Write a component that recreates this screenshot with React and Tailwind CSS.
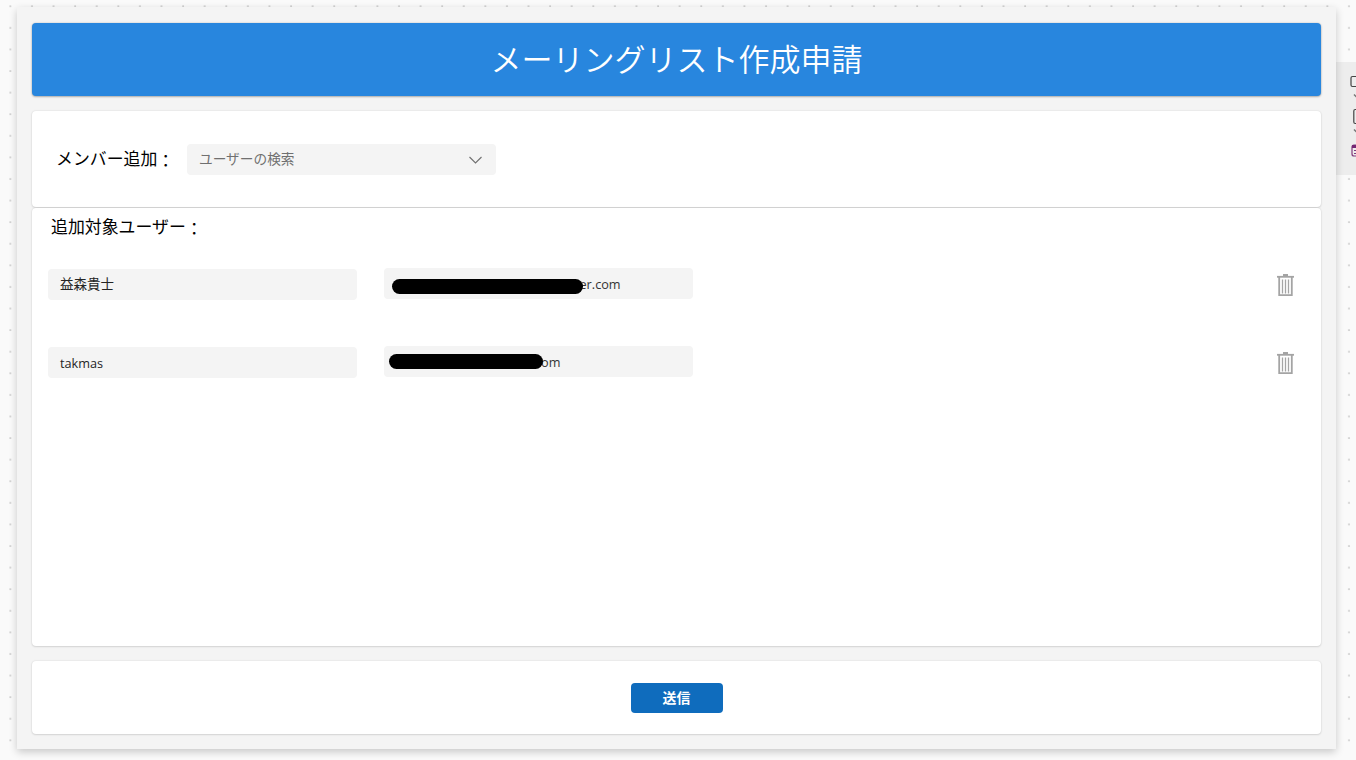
const users = [
  { name: "益森貴士", nameText: "text-[13.5px]", mail: "er.com", mailPad: "pl-[195.5px] pt-[3px]", mask: "left-[8px] top-[11px] w-[191px]" },
  { name: "takmas", nameText: "text-[12.7px] pt-[2px]", mail: "om", mailPad: "pl-[157px] pt-[2px]", mask: "left-[5px] top-[8px] w-[154px]" },
];

const TrashIcon = () => (
  <svg width="17" height="23" viewBox="0 0 17 23" fill="none" stroke="#a4a4a4">
    <path d="M6 1h5" strokeWidth="2" />
    <path d="M0 2.8h17" strokeWidth="1.8" />
    <path d="M2.2 3v18.2h12.6V3" strokeWidth="1.8" />
    <path d="M5.5 5.5v14M8.5 5.5v14M11.5 5.5v14" strokeWidth="1.3" />
  </svg>
);

const UserRow = ({ user }) => (
  <div className="flex h-[78px] items-start">
    <div className={`mt-[1px] flex h-[31px] w-[309px] items-center rounded-[4px] bg-[#f4f4f4] pl-3 text-[#242424] ${user.nameText}`}>
      {user.name}
    </div>
    <div className={`relative ml-[27px] flex h-[31px] w-[309px] items-center rounded-[4px] bg-[#f4f4f4] text-[12.7px] text-[#333] ${user.mailPad}`}>
      {user.mail}
      <span className={`absolute h-[15px] rounded-full bg-black ${user.mask}`} />
    </div>
    <button className="ml-auto mr-[27px] mt-[5.5px]" aria-label="削除">
      <TrashIcon />
    </button>
  </div>
);

// Canvas grid dots around the form
const DotGrid = () => (
  <svg className="absolute inset-0" width="1356" height="760">
    <defs>
      <pattern id="dots" x="-0.5" y="-4.6" width="21.59" height="21.59" patternUnits="userSpaceOnUse">
        <rect x="10" y="10" width="1.8" height="1.8" fill="#cfcfcf" />
      </pattern>
    </defs>
    <rect width="1356" height="760" fill="url(#dots)" />
  </svg>
);

// Edge of the tool bar, cut off by the window
const SideTools = () => (
  <div className="absolute left-[1336px] top-[62px] h-[113px] w-5 bg-[#ededed]">
    <svg width="20" height="113" fill="none" stroke="#444" strokeWidth="1.2">
      <rect x="15" y="14.5" width="12" height="10" rx="1.5" />
      <path d="M18 32.5l2 2 2-2" stroke="#777" strokeWidth="1.5" />
      <rect x="17.8" y="47.5" width="10" height="14" rx="1.5" />
      <path d="M18 67.5l2 2 2-2" stroke="#777" strokeWidth="1.5" />
      <rect x="16" y="83" width="12" height="11" rx="2" stroke="#813a7c" />
      <path d="M16 84.5h4" stroke="#742774" strokeWidth="3" />
      <path d="M18 88.5h2M18 91.5h2" stroke="#813a7c" />
    </svg>
  </div>
);

const card = "rounded-[4px] bg-white shadow-[0_0_2px_rgba(0,0,0,0.12),0_1px_2px_rgba(0,0,0,0.1)]";

export default function App() {
  return (
    <div className="relative h-[760px] w-[1356px] overflow-hidden bg-[#fafafa] pl-[17px] pt-[7px] font-['Open_Sans','Noto_Sans_CJK_JP',sans-serif]">
      <DotGrid />
      <SideTools />
      <main className="relative flex h-[742px] w-[1319px] flex-col bg-[#f4f4f4] px-[15px] pt-4 shadow-[0_3px_8px_rgba(0,0,0,0.2)]">
        <header className="flex h-[72.5px] shrink-0 items-center justify-center rounded-[4px] bg-[#2886de] pb-[3px] shadow-[0_0_2px_rgba(0,0,0,0.18),0_1px_2px_rgba(0,0,0,0.25)]">
          <h1 className="font-['Noto_Sans_CJK_JP',sans-serif] text-[31px] font-[350] leading-none text-white">メーリングリスト作成申請</h1>
        </header>

        <section className={`mt-[15.5px] flex h-[96px] shrink-0 items-center pl-6 ${card}`}>
          <label className="w-[131px] text-[16.9px] text-black">
            メンバー追加<span className="relative top-[2px]">：</span>
          </label>
          <div className="flex h-[31px] w-[308.5px] items-center justify-between rounded-[4px] bg-[#f4f4f4] pl-3 pr-[14px] pt-px text-[13.7px] text-[#707070]">
            ユーザーの検索
            <svg width="13" height="8" viewBox="0 0 13 8" fill="none" stroke="#707070" strokeWidth="1.1">
              <path d="M.5 1l6 6 6-6" />
            </svg>
          </div>
        </section>

        <section className={`mt-[1px] flex h-[438px] shrink-0 flex-col pl-4 ${card}`}>
          <h2 className="mb-[22px] flex h-[38px] items-center pl-[3px] text-[16.9px] text-black">
            追加対象ユーザー<span className="relative top-[2px]">：</span>
          </h2>
          {users.map((user) => (
            <UserRow key={user.name} user={user} />
          ))}
        </section>

        <footer className={`mt-[15px] flex h-[73px] shrink-0 items-center justify-center ${card}`}>
          <button className="flex h-[30px] w-[92px] items-center justify-center rounded-[4px] bg-[#0f6cbd] pt-px text-[13.9px] font-bold text-white">
            送信
          </button>
        </footer>
      </main>
    </div>
  );
}
